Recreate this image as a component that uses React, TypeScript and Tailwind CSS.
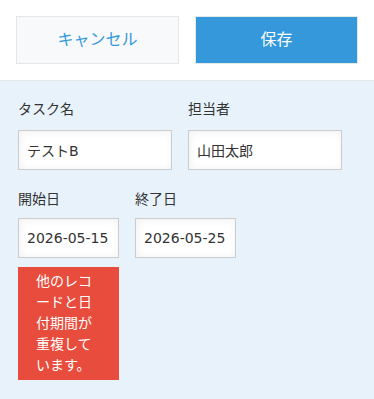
import React from 'react';

const font = { fontFamily: '"DejaVu Sans", "Noto Sans CJK JP", sans-serif' };

const Field: React.FC<{ label: string; value: string; width: string; gap?: string }> = ({ label, value, width, gap = 'mt-[10px]' }) => (
  <div className="flex flex-col">
    <label className="text-[14px] leading-[21px] text-[#333333]">{label}</label>
    <input
      readOnly
      value={value}
      className={`${gap} h-[40px] ${width} border border-[#cccccc] bg-white px-[8px] text-[14px] text-[#333333] shadow-[inset_1px_1px_8px_#f0f0f0] outline-none`}
    />
  </div>
);

export default function App() {
  return (
    <div className="min-h-[399px] w-[374px] bg-[#e8f2fb] text-[#333333]" style={font}>
      {/* Action bar */}
      <div className="flex gap-[16px] border-b border-[#e3e7e8] bg-white p-[16px]">
        <button className="h-[48px] w-[163px] border border-[#e3e7e8] bg-[#f7f9fa] text-[16px] text-[#3498db]">
          キャンセル
        </button>
        <button className="h-[48px] w-[163px] border border-[#e3e7e8] bg-[#3498db] text-[16px] text-white">
          保存
        </button>
      </div>

      {/* Form */}
      <div className="px-[18px] pt-[18px]">
        <div className="flex gap-[16px]">
          <Field label="タスク名" value="テストB" width="w-[154px]" />
          <Field label="担当者" value="山田太郎" width="w-[154px]" />
        </div>

        <div className="mt-[19px] flex gap-[16px]">
          <div className="flex flex-col">
            <Field label="開始日" value="2026-05-15" width="w-[101px]" gap="mt-[8px]" />
            <div className="mt-[9px] w-[101px] bg-[#e74c3c] px-[18px] py-[4px] text-[14px] leading-[21px] text-white">
              他のレコードと日付期間が重複しています。
            </div>
          </div>
          <Field label="終了日" value="2026-05-25" width="w-[101px]" gap="mt-[8px]" />
        </div>
      </div>
    </div>
  );
}
